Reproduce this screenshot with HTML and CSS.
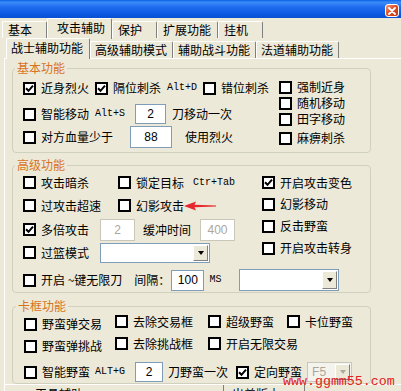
FILE: index.html
```html
<!DOCTYPE html>
<html lang="zh-CN">
<head>
    <meta charset="UTF-8">
    <title>攻击辅助</title>
    <link rel="stylesheet" href="styles.css">
</head>
<body>
    <div class="titlebar">
        <span class="close-btn">
            <svg width="8" height="8" viewBox="0 0 8 8"><path d="M1 1L7 7M7 1L1 7" stroke="#fff" stroke-width="1.8" stroke-linecap="round"/></svg>
        </span>
    </div>

    <div class="tabs outer-tabs">
        <span class="tab">基本</span>
        <span class="tab active">攻击辅助</span>
        <span class="tab">保护</span>
        <span class="tab">扩展功能</span>
        <span class="tab">挂机</span>
    </div>
    <div class="tabs inner-tabs">
        <span class="tab active">战士辅助功能</span>
        <span class="tab">高级辅助模式</span>
        <span class="tab">辅助战斗功能</span>
        <span class="tab">法道辅助功能</span>
    </div>

    <div class="panel">
        <!-- 基本功能 -->
        <fieldset class="group basic">
            <legend>基本功能</legend>
            <div class="split">
                <div class="basic-left">
                    <div class="row h22">
                        <label class="cb"><span class="box"><svg width="9" height="9" viewBox="0 0 9 9"><path d="M1 4.3L3.5 6.8L8 1.6" fill="none" stroke="#000" stroke-width="2"/></svg></span>近身烈火</label>
                        <label class="cb"><span class="box"><svg width="9" height="9" viewBox="0 0 9 9"><path d="M1 4.3L3.5 6.8L8 1.6" fill="none" stroke="#000" stroke-width="2"/></svg></span>隔位刺杀</label>
                        <span class="key">Alt+D</span>
                        <label class="cb"><span class="box"></span>错位刺杀</label>
                    </div>
                    <div class="row h30">
                        <label class="cb"><span class="box"></span>智能移动</label>
                        <span class="key">Alt+S</span>
                        <input class="num w31 h20 ml4" value="2">
                        <span>刀移动一次</span>
                    </div>
                    <div class="row h16">
                        <label class="cb"><span class="box"></span>对方血量少于</label>
                        <input class="num w42 h22 ml11" value="88">
                        <span class="ml7">使用烈火</span>
                    </div>
                </div>
                <div class="basic-right">
                    <label class="cb h16"><span class="box"></span>强制近身</label>
                    <label class="cb h16"><span class="box"></span>随机移动</label>
                    <label class="cb h16"><span class="box"></span>田字移动</label>
                    <label class="cb h16 mt3"><span class="box"></span>麻痹刺杀</label>
                </div>
            </div>
        </fieldset>

        <!-- 高级功能 -->
        <fieldset class="group adv">
            <legend>高级功能</legend>
            <div class="split">
                <div class="adv-left">
                    <div class="row h21">
                        <label class="cb"><span class="box"></span>攻击暗杀</label>
                        <label class="cb ml23"><span class="box"></span>锁定目标</label>
                        <span class="key ml3">Ctr+Tab</span>
                    </div>
                    <div class="row h25">
                        <label class="cb"><span class="box"></span>过攻击超速</label>
                        <label class="cb ml11"><span class="box"></span>幻影攻击</label>
                        <svg class="arrow" width="32" height="10" viewBox="0 0 32 10"><polygon points="0,5 12,0.5 10.5,3.8 32,4.6 32,5.4 10.5,6.2 12,9.5" fill="#e8262d"/></svg>
                    </div>
                    <div class="row h23">
                        <label class="cb"><span class="box"><svg width="9" height="9" viewBox="0 0 9 9"><path d="M1 4.3L3.5 6.8L8 1.6" fill="none" stroke="#000" stroke-width="2"/></svg></span>多倍攻击</label>
                        <input class="num w35 h22 ml5" value="2" disabled>
                        <span class="ml2">缓冲时间</span>
                        <input class="num w35 h22 ml3" value="400" disabled>
                    </div>
                    <div class="row h23">
                        <label class="cb"><span class="box"></span>过篮模式</label>
                        <div class="combo w110 ml5"><span class="combo-text"></span><span class="combo-btn"><i class="tri"></i></span></div>
                    </div>
                </div>
                <div class="adv-right">
                    <label class="cb h21"><span class="box"><svg width="9" height="9" viewBox="0 0 9 9"><path d="M1 4.3L3.5 6.8L8 1.6" fill="none" stroke="#000" stroke-width="2"/></svg></span>开启攻击变色</label>
                    <label class="cb h22"><span class="box"></span>幻影移动</label>
                    <label class="cb h22"><span class="box"></span>反击野蛮</label>
                    <label class="cb h22"><span class="box"></span>开启攻击转身</label>
                </div>
            </div>
            <div class="row h24 mt4">
                <label class="cb"><span class="box"></span>开启 ~键无限刀</label>
                <span class="ml6">间隔：</span>
                <input class="num w33 h21 mln5" value="100">
                <span class="key mln1">MS</span>
                <div class="combo w100 h22 ml12"><span class="combo-text"></span><span class="combo-btn"><i class="tri"></i></span></div>
            </div>
        </fieldset>

        <!-- 卡框功能 -->
        <fieldset class="group card">
            <legend>卡框功能</legend>
            <div class="card-grid">
                <label class="cb"><span class="box"></span>野蛮弹交易</label>
                <label class="cb lift"><span class="box"></span>去除交易框</label>
                <label class="cb lift"><span class="box"></span>超级野蛮</label>
                <label class="cb lift"><span class="box"></span>卡位野蛮</label>
                <label class="cb"><span class="box"></span>野蛮弹挑战</label>
                <label class="cb lift"><span class="box"></span>去除挑战框</label>
                <label class="cb lift"><span class="box"></span>开启无限交易</label>
            </div>
            <div class="row card-last">
                <label class="cb"><span class="box"></span>智能野蛮</label>
                <span class="key">ALT+G</span>
                <input class="num w28 h20 ml5" value="2">
                <span>刀野蛮一次</span>
                <label class="cb ml3"><span class="box"><svg width="9" height="9" viewBox="0 0 9 9"><path d="M1 4.3L3.5 6.8L8 1.6" fill="none" stroke="#000" stroke-width="2"/></svg></span>定向野蛮</label>
                <div class="combo off w45"><span class="combo-text">F5</span><span class="combo-btn"><i class="tri"></i></span></div>
            </div>
        </fieldset>

        <div class="bottom">
            <span class="bottom-item first">工具辅助</span>
            <span class="bottom-item">出差版本</span>
        </div>
    </div>

    <div class="watermark">www.ggmm55.com</div>
</body>
</html>
```

FILE: styles.css
```css
body {
    margin: 0;
    width: 401px;
    height: 391px;
    overflow: hidden;
    position: relative;
    background-color: #ece9d8;
    font-family: "Noto Sans CJK SC", sans-serif;
    font-size: 12px;
    line-height: 16px;
    color: #000;
}

/* 标题栏 */
.titlebar {
    height: 18px;
    display: flex;
    justify-content: flex-end;
    align-items: flex-end;
    padding-right: 2px;
    background: linear-gradient(to bottom, #0a5fe8 0%, #3b8cf8 12%, #1f6cf0 40%, #0b57e0 80%, #0a4fd0 100%);
}
.close-btn {
    width: 14px;
    height: 13px;
    box-sizing: border-box;
    margin-bottom: 1px;
    border: 1px solid #fff;
    border-radius: 3px;
    background: linear-gradient(135deg, #f29a78, #dc4a22 50%, #c13913);
    display: flex;
    align-items: center;
    justify-content: center;
}

/* 标签页 */
.tabs {
    display: flex;
    align-items: flex-end;
    height: 20px;
}
.outer-tabs {
    padding-left: 2px;
}
.inner-tabs {
    padding-left: 6px;
}
.tab {
    box-sizing: border-box;
    height: 17px;
    line-height: 16px;
    white-space: nowrap;
    border-top: 1px solid #fff;
    border-left: 1px solid #fff;
    border-right: 1px solid #808080;
    border-radius: 2px 2px 0 0;
    background-color: #ece9d8;
}
.outer-tabs .tab {
    min-width: 45px;
    padding: 0 6px 0 5px;
}
.outer-tabs .tab.active {
    padding-left: 9px;
}
.inner-tabs .tab {
    padding: 0 5px 0 4px;
}
.inner-tabs .tab.active {
    padding-right: 6px;
}
.tab.active {
    height: 21px;
    line-height: 18px;
    margin-bottom: -1px;
    position: relative;
    z-index: 1;
}

.panel {
    margin-left: 4px;
    border-top: 1px solid #fff;
    border-left: 1px solid #fff;
}

/* 分组框 */
.group {
    box-sizing: border-box;
    width: 359px;
    margin: 2px 0 0 7px;
    padding: 2px 0 6px 10px;
    border: 1px solid #d0d0bf;
    border-radius: 4px;
    min-width: 0;
}
.group legend {
    margin-left: -8px;
    padding: 0 2px;
    line-height: 14px;
    color: #d8731e;
}
.adv {
    margin-top: 5px;
    padding-top: 0;
    padding-bottom: 0;
}
.card {
    margin-top: 6px;
    padding: 0 0 0 11px;
}

.split {
    display: flex;
    align-items: flex-start;
}
.basic-left {
    width: 256px;
}
.basic-right {
    padding-top: 2px;
    display: flex;
    flex-direction: column;
}
.adv-left {
    width: 239px;
}
.adv-right {
    display: flex;
    flex-direction: column;
}

.row {
    display: flex;
    align-items: center;
    gap: 6px;
    white-space: nowrap;
}
.card-grid {
    display: grid;
    grid-template-columns: 91px 93px 79px auto;
    grid-auto-rows: 22px;
    align-items: center;
    white-space: nowrap;
}
.card-last {
    height: 22px;
    margin-top: 4px;
    gap: 5px;
}

/* 复选框 */
.cb {
    display: flex;
    align-items: center;
    gap: 5px;
    white-space: nowrap;
}
.box {
    width: 13px;
    height: 13px;
    flex: none;
    box-sizing: border-box;
    border: 2px solid #000;
    background-color: #fff;
    display: flex;
    align-items: center;
    justify-content: center;
}
.lift {
    margin-top: -5px;
}

.key {
    font-family: "Liberation Mono", monospace;
    font-size: 10px;
}

/* 输入框 */
.num {
    box-sizing: border-box;
    margin: 0;
    padding: 0;
    border: 1px solid #7f9db9;
    background-color: #fff;
    font-family: "Liberation Sans", sans-serif;
    font-size: 12px;
    color: #000;
    text-align: center;
    outline: none;
}
.num:disabled {
    border-color: #c9c7ba;
    background-color: #fff;
    color: #aca899;
}

/* 下拉框 */
.combo {
    box-sizing: border-box;
    height: 20px;
    padding: 1px;
    display: flex;
    border: 1px solid #7f9db9;
    background-color: #fff;
}
.combo-text {
    flex: 1;
    padding-left: 3px;
    line-height: 16px;
    font-family: "Liberation Sans", sans-serif;
}
.combo-btn {
    width: 15px;
    box-sizing: border-box;
    border: 1px solid;
    border-color: #fff #808080 #808080 #fff;
    background-color: #ece9d8;
    display: flex;
    align-items: center;
    justify-content: center;
}
.tri {
    width: 0;
    height: 0;
    border-left: 3.5px solid transparent;
    border-right: 3.5px solid transparent;
    border-top: 4px solid #000;
}
.combo.off {
    border-color: #c9c7ba;
    background-color: #f4f3ee;
    color: #aca899;
}
.combo.off .tri {
    border-top-color: #aca899;
}

.arrow {
    margin-left: -6px;
}

/* 尺寸 */
.w28 { width: 28px; }
.w31 { width: 31px; }
.w33 { width: 33px; }
.w35 { width: 35px; }
.w42 { width: 42px; }
.w45 { width: 45px; }
.w100 { width: 100px; }
.w110 { width: 110px; }
.h16 { height: 16px; }
.h20 { height: 20px; }
.h21 { height: 21px; }
.h22 { height: 22px; }
.h23 { height: 23px; }
.h24 { height: 24px; }
.h25 { height: 25px; }
.h30 { height: 30px; }
.mt3 { margin-top: 3px; }
.mt4 { margin-top: 4px; }
.ml2 { margin-left: 2px; }
.ml3 { margin-left: 3px; }
.ml4 { margin-left: 4px; }
.ml5 { margin-left: 5px; }
.ml6 { margin-left: 6px; }
.ml7 { margin-left: 7px; }
.ml11 { margin-left: 11px; }
.ml12 { margin-left: 12px; }
.ml23 { margin-left: 23px; }
.mln1 { margin-left: -1px; }
.mln5 { margin-left: -5px; }

/* 底部 */
.bottom {
    height: 8px;
    overflow: hidden;
    display: flex;
    border-top: 1px solid #fff;
}
.bottom-item {
    padding-top: 1px;
    line-height: 16px;
}
.bottom-item.first {
    margin-left: 30px;
    width: 188px;
    border-right: 1px solid #808080;
}
.bottom-item + .bottom-item {
    padding-left: 8px;
    width: 72px;
    border-right: 1px solid #808080;
}

.watermark {
    position: absolute;
    left: 283px;
    top: 374px;
    font-family: "Liberation Mono", monospace;
    font-size: 13.3px;
    line-height: 16px;
    color: #e02020;
}
```
